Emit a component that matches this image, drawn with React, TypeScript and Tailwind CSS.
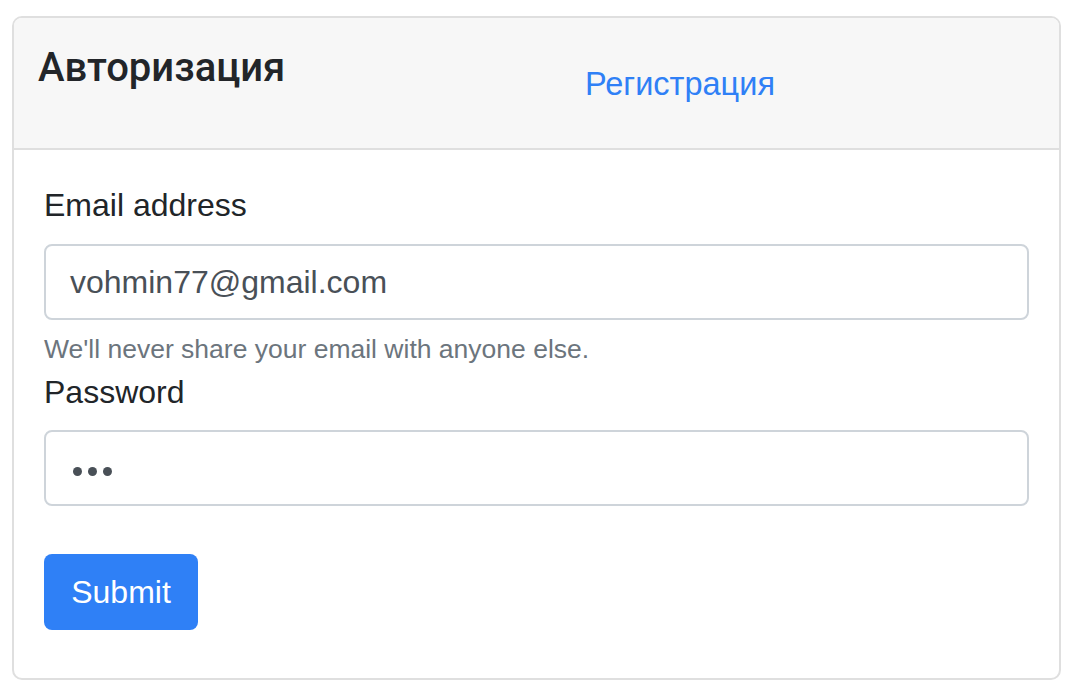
export default function App() {
  return (
    <div className="min-h-[694px] bg-white pt-[16px] pl-[12px] pr-[13px] font-['Liberation_Sans',sans-serif]">
      <div className="border-2 border-[#dfdfdf] rounded-[10px] overflow-hidden">
        {/* header */}
        <div className="h-[132px] bg-[#f7f7f7] border-b-2 border-[#dfdfdf] flex items-start pl-[24px] pt-[26px]">
          <h3 className="w-[547px] text-[40px] leading-[48px] font-medium text-[#222529] font-['Roboto',sans-serif]">
            Авторизация
          </h3>
          <a href="#" className="mt-[20px] text-[32.5px] leading-[40px] text-[#2f80f6]">
            Регистрация
          </a>
        </div>

        {/* body */}
        <form className="pt-[31px] px-[30px] pb-[48px] text-[#212529]">
          <label className="block text-[32px] leading-[48px]">Email address</label>
          <div className="mt-[15px] h-[76px] border-2 border-[#ced4da] rounded-[8px] flex items-center px-[24px] text-[32px] text-[#495057]">
            vohmin77@gmail.com
          </div>
          <p className="mt-[11px] text-[26.5px] leading-[36px] text-[#6c757d]">
            We'll never share your email with anyone else.
          </p>
          <label className="block mt-[1px] text-[32px] leading-[48px]">Password</label>
          <div className="mt-[14px] h-[76px] border-2 border-[#ced4da] rounded-[8px] flex items-center gap-[6px] pl-[27px] pt-[6px]">
            <span className="w-[9px] h-[9px] rounded-full bg-[#495057]" />
            <span className="w-[9px] h-[9px] rounded-full bg-[#495057]" />
            <span className="w-[9px] h-[9px] rounded-full bg-[#495057]" />
          </div>
          <button
            type="button"
            className="mt-[48px] w-[154px] h-[76px] rounded-[8px] bg-[#2f80f6] text-white text-[32px]"
          >
            Submit
          </button>
        </form>
      </div>
    </div>
  );
}
